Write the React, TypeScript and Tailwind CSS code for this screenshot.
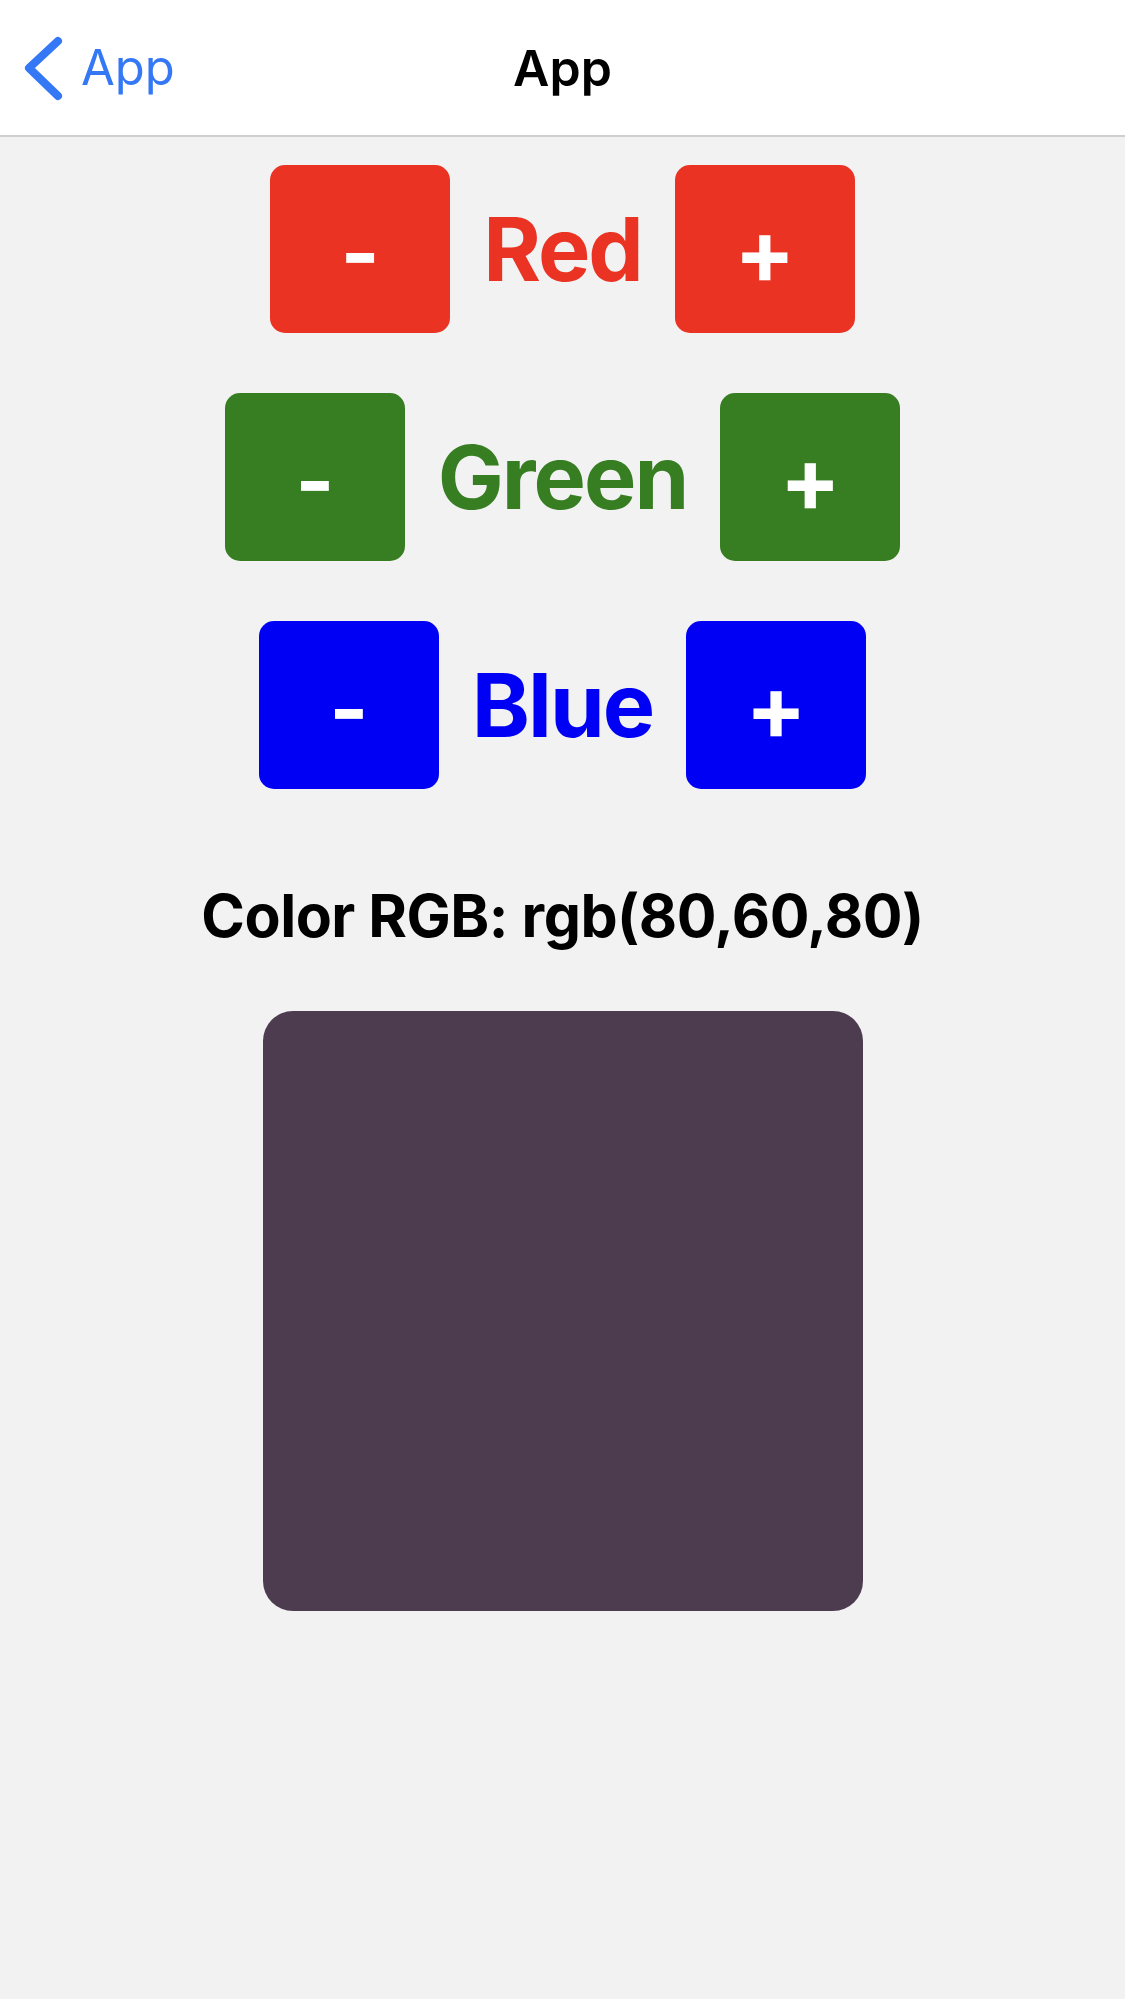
import { useState } from "react";

const font = { fontFamily: "Inter, 'Liberation Sans', sans-serif" };

function Stepper({
  label,
  color,
  onMinus,
  onPlus,
}: {
  label: string;
  color: string;
  onMinus: () => void;
  onPlus: () => void;
}) {
  const bg =
    color === "red" ? "bg-[#ea3323]" : color === "green" ? "bg-[#377e22]" : "bg-[#0000f5]";
  const btn =
    "w-[180px] h-[168px] rounded-[15px] flex items-center justify-center text-white font-bold leading-none";
  return (
    <div className="flex items-center justify-center">
      <button type="button" onClick={onMinus} className={`${btn} ${bg} text-[84px] pt-[8px]`}>
        -
      </button>
      <span
        className={`mx-[33px] text-[88px] font-bold leading-none tracking-[-2px] ${
          color === "red"
            ? "text-[#ea3323]"
            : color === "green"
            ? "text-[#377e22]"
            : "text-[#0000f5]"
        }`}
      >
        {label}
      </span>
      <button type="button" onClick={onPlus} className={`${btn} ${bg} text-[90px] pt-[6px]`}>
        +
      </button>
    </div>
  );
}

export default function App() {
  const [rgb, setRgb] = useState({ r: 80, g: 60, b: 80 });

  const change = (key: "r" | "g" | "b", d: number) => {
    setRgb((c) => ({ ...c, [key]: Math.min(255, Math.max(0, c[key] + d)) }));
  };

  return (
    <div className="min-h-screen w-full bg-[#f2f2f2]" style={font}>
      <div className="h-[137px] bg-white border-b-2 border-[#cfcfcf] grid grid-cols-[1fr_auto_1fr] items-center">
        <div className="flex items-center pl-[21px]">
          <svg
            width="44"
            height="66"
            viewBox="0 0 44 66"
            fill="none"
            stroke="#3478f6"
            strokeWidth="8"
            strokeLinecap="round"
            strokeLinejoin="round"
          >
            <path d="M37 6 L8 33 L37 61" />
          </svg>
          <span className="ml-[16px] text-[49px] text-[#3478f6] leading-none">App</span>
        </div>
        <div className="text-[50px] font-semibold text-black leading-none">App</div>
        <div />
      </div>

      <div className="flex flex-col items-center pt-[28px]">
        <div className="flex flex-col gap-[60px]">
          <Stepper
            label="Red"
            color="red"
            onMinus={() => change("r", -10)}
            onPlus={() => change("r", 10)}
          />
          <Stepper
            label="Green"
            color="green"
            onMinus={() => change("g", -10)}
            onPlus={() => change("g", 10)}
          />
          <Stepper
            label="Blue"
            color="blue"
            onMinus={() => change("b", -10)}
            onPlus={() => change("b", 10)}
          />
        </div>

        <p className="mt-[91px] text-[59px] font-bold text-black leading-[72px] tracking-[-0.5px]">
          Color RGB: rgb({rgb.r},{rgb.g},{rgb.b})
        </p>

        <div
          className="mt-[59px] w-[600px] h-[600px] rounded-[30px]"
          style={{ backgroundColor: `rgb(${rgb.r - 3},${rgb.g},${rgb.b})` }}
        />
      </div>
    </div>
  );
}
